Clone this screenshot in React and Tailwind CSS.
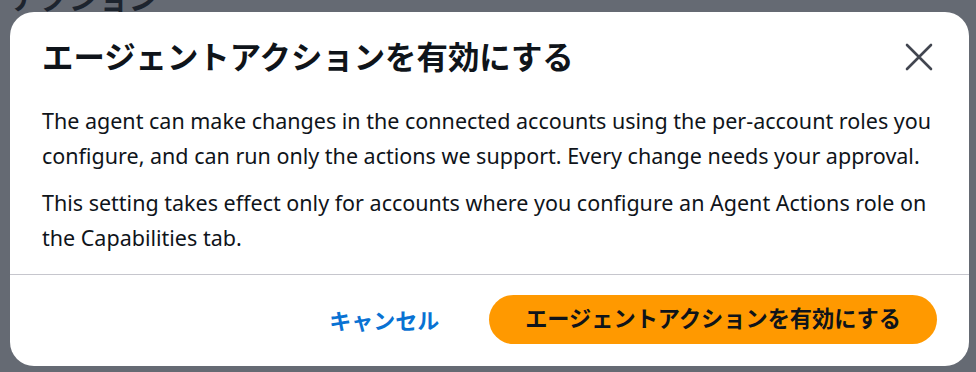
import React from "react";

const FONT = { fontFamily: '"Noto Sans", "Noto Sans CJK JP", sans-serif' };

function CloseIcon() {
  return (
    <svg width="28" height="28" viewBox="0 0 28 28" fill="none">
      <path d="M2 2 L26 26 M26 2 L2 26" stroke="#424650" strokeWidth="2.6" strokeLinecap="round" />
    </svg>
  );
}

export default function App() {
  return (
    <div className="relative w-[976px] h-[372px] overflow-hidden bg-white text-[#0f141a]" style={FONT}>
      {/* underlying page */}
      <div className="flex flex-col pl-[10px]">
        <div className="flex items-center gap-2 -mt-[22px] h-[40px]">
          <span className="text-[30px] font-bold leading-none">アクション</span>
        </div>
        <div className="mt-[80px] text-[20px] text-[#424650]">ec</div>
        <div className="mt-[40px] text-[22px]">r</div>
        <div className="mt-[60px] h-px bg-[#c6c6cd] w-[300px]" />
        <div className="mt-[20px] h-px bg-[#c6c6cd] w-[300px]" />
        <div className="mt-[50px] pl-[30px] text-[18px]">ガ面行を関するしょ</div>
      </div>
      {/* overlay */}
      <div className="absolute inset-0 bg-[rgba(35,43,55,0.7)]" />
      {/* modal */}
      <div className="absolute inset-0 pl-[10px] pt-[12px]">
        <div className="w-[959px] h-[354px] rounded-[24px] bg-white flex flex-col">
          <div className="flex items-center justify-between pl-[32px] pr-[36px] pt-[25px]">
            <h1 className="text-[31.4px] font-bold leading-[40px]">エージェントアクションを有効にする</h1>
            <CloseIcon />
          </div>
          <div className="px-[32px] pt-[26px] text-[21.5px] leading-[35px] flex flex-col gap-[12px]">
            <p>The agent can make changes in the connected accounts using the per-account roles you configure, and can run only the actions we support. Every change needs your approval.</p>
            <p>This setting takes effect only for accounts where you configure an Agent Actions role on the Capabilities tab.</p>
          </div>
          <div className="mt-[19px] h-px bg-[#c6c6cd]" />
          <div className="flex items-center justify-end gap-[50px] px-[32px] pt-[20px]">
            <button className="text-[22px] font-bold text-[#0972d3] leading-none">キャンセル</button>
            <button className="h-[49px] px-[36px] rounded-full bg-[#ff9900] text-[22.2px] font-bold text-[#0f141a] leading-none">エージェントアクションを有効にする</button>
          </div>
        </div>
      </div>
    </div>
  );
}
